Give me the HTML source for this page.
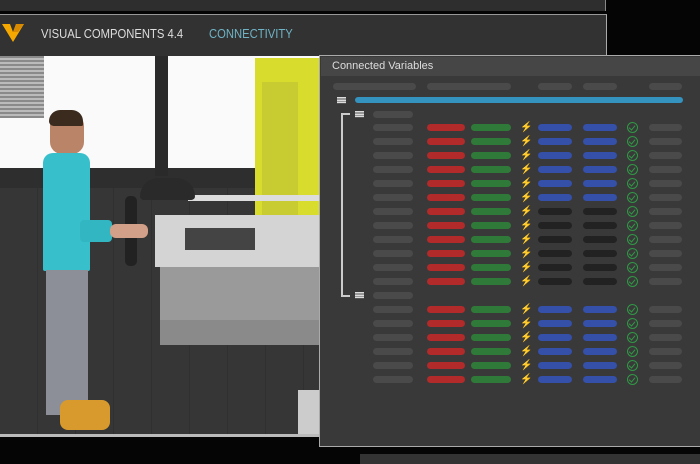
<!DOCTYPE html>
<html><head><meta charset="utf-8"><style>
*{margin:0;padding:0;box-sizing:border-box}
body{width:700px;height:464px;overflow:hidden;background:#050505;position:relative;font-family:"Liberation Sans",sans-serif}
.a{position:absolute}
.r{position:absolute;left:0;width:700px;height:8px}
.r i{position:absolute;top:0;height:7px;border-radius:4px;display:block}
.g{background:#4a4a4a}.rd{background:#b22a2a}.gr{background:#2f7a38}.bl{background:#3450a8}.bk{background:#222}
.n{left:373px;width:40px}.c1{left:427px;width:38px}.c2{left:471px;width:40px}.c3{left:538px;width:34px}.c4{left:583px;width:34px}.c6{left:649px;width:33px}
.r b{position:absolute;left:520px;top:-2px;color:#f2b61c;font-size:10px;font-weight:bold}
.r s{position:absolute;left:627px;top:-2px;width:11px;height:11px;border:1.5px solid #2f9a45;border-radius:50%;text-decoration:none}
.r s:after{content:"";position:absolute;left:2px;top:1px;width:3px;height:5px;border:solid #2f9a45;border-width:0 1.5px 1.5px 0;transform:rotate(40deg)}
.ic{position:absolute;width:9px;height:7px;background:repeating-linear-gradient(#ddd 0 1.5px,#555 1.5px 2.3px)}
.hd{position:absolute;top:27px;font-size:12.5px;transform-origin:0 0;transform:scaleX(0.9);white-space:nowrap}
</style></head><body>
<div class="a" style="left:0;top:0;width:606px;height:11px;background:#2e2e2e;border-right:1px solid #888"></div>
<div class="a" style="left:0;top:14px;width:607px;height:42px;background:#323232;border-top:1px solid #999;border-right:1.5px solid #aaa"></div>
<svg class="a" style="left:2px;top:22px" width="24" height="22"><path d="M0 2 L8 2 L11 10 L14 2 L22 2 L11 20 Z" fill="#f5a800"/><path d="M11 10 L14 2 L22 2 L16 10Z" fill="#d88a00"/></svg>
<div class="hd" style="left:41px;color:#ddd">VISUAL COMPONENTS 4.4</div>
<div class="hd" style="left:209px;color:#6fb3c6">CONNECTIVITY</div>
<!-- scene -->
<div class="a" style="left:0;top:56px;width:320px;height:378px;background:#3a3a3a"></div>
<div class="a" style="left:0;top:56px;width:320px;height:113px;background:#fafafa"></div>
<div class="a" style="left:0;top:56px;width:44px;height:62px;background:repeating-linear-gradient(#8a8a8a 0 2px,#bbb 2px 4px)"></div>
<div class="a" style="left:0;top:168px;width:320px;height:20px;background:#2e2e2e"></div>
<div class="a" style="left:0;top:188px;width:320px;height:246px;background:repeating-linear-gradient(90deg,#363636 0 37px,#303030 37px 38px),#363636"></div>
<div class="a" style="left:155px;top:56px;width:13px;height:120px;background:#2a2a2a"></div>
<div class="a" style="left:255px;top:58px;width:65px;height:175px;background:#d8dc2c"></div>
<div class="a" style="left:262px;top:82px;width:36px;height:140px;background:#c8cc30"></div>
<div class="a" style="left:160px;top:265px;width:160px;height:80px;background:#9a9a9a"></div>
<div class="a" style="left:160px;top:320px;width:160px;height:25px;background:#8a8a8a"></div>
<div class="a" style="left:155px;top:215px;width:165px;height:52px;background:#d4d4d4"></div>
<div class="a" style="left:185px;top:228px;width:70px;height:22px;background:#444"></div>
<div class="a" style="left:188px;top:195px;width:132px;height:6px;background:#ddd"></div>
<div class="a" style="left:140px;top:178px;width:55px;height:22px;background:#2a2a2a;border-radius:20px 20px 4px 4px"></div>
<div class="a" style="left:125px;top:196px;width:12px;height:70px;background:#222;border-radius:5px"></div>
<div class="a" style="left:298px;top:390px;width:22px;height:44px;background:#ccc"></div>
<!-- person -->
<div class="a" style="left:50px;top:112px;width:34px;height:42px;background:#b98468;border-radius:14px 14px 12px 12px"></div>
<div class="a" style="left:49px;top:110px;width:34px;height:16px;background:#3b2a1e;border-radius:14px 14px 2px 6px"></div>
<div class="a" style="left:43px;top:153px;width:47px;height:118px;background:#37c0cc;border-radius:10px 10px 2px 2px"></div>
<div class="a" style="left:80px;top:220px;width:32px;height:22px;background:#32b6c2;border-radius:4px"></div>
<div class="a" style="left:110px;top:224px;width:38px;height:14px;background:#d2a088;border-radius:6px"></div>
<div class="a" style="left:46px;top:270px;width:42px;height:145px;background:#8c8e98"></div>
<div class="a" style="left:60px;top:400px;width:50px;height:30px;background:#d89a2c;border-radius:8px"></div>
<!-- bottom -->
<div class="a" style="left:0;top:434px;width:320px;height:3px;background:#bbb"></div>
<!-- panel -->
<div class="a" style="left:319px;top:55px;width:381px;height:392px;background:#393939;border:1.5px solid #aaa;border-right:none"></div>
<div class="a" style="left:321px;top:57px;width:379px;height:19px;background:#464646"></div>
<div class="a" style="left:332px;top:60px;color:#ddd;font-size:11px">Connected Variables</div>
<div class="a" style="left:360px;top:454px;width:340px;height:10px;background:#333"></div>
<div class="r" style="top:83px"><i class="g" style="left:333px;width:83px"></i><i class="g" style="left:427px;width:84px"></i><i class="g c3"></i><i class="g c4"></i><i class="g c6"></i></div>
<div class="ic" style="left:337px;top:97px"></div>
<div class="a" style="left:355px;top:97px;width:328px;height:6px;background:#3593bf;border-radius:3px"></div>
<div class="a" style="left:341px;top:113px;width:1.5px;height:183px;background:#ccc"></div>
<div class="a" style="left:341px;top:113px;width:9px;height:1.5px;background:#ccc"></div>
<div class="a" style="left:341px;top:295px;width:9px;height:1.5px;background:#ccc"></div>
<div class="ic" style="left:355px;top:111px"></div>
<div class="r" style="top:111px"><i class="g n"></i></div>
<div class="ic" style="left:355px;top:292px"></div>
<div class="r" style="top:292px"><i class="g n"></i></div>

<div class="r" style="top:124px"><i class="g n"></i><i class="rd c1"></i><i class="gr c2"></i><b>⚡</b><i class="bl c3"></i><i class="bl c4"></i><s></s><i class="g c6"></i></div>
<div class="r" style="top:138px"><i class="g n"></i><i class="rd c1"></i><i class="gr c2"></i><b>⚡</b><i class="bl c3"></i><i class="bl c4"></i><s></s><i class="g c6"></i></div>
<div class="r" style="top:152px"><i class="g n"></i><i class="rd c1"></i><i class="gr c2"></i><b>⚡</b><i class="bl c3"></i><i class="bl c4"></i><s></s><i class="g c6"></i></div>
<div class="r" style="top:166px"><i class="g n"></i><i class="rd c1"></i><i class="gr c2"></i><b>⚡</b><i class="bl c3"></i><i class="bl c4"></i><s></s><i class="g c6"></i></div>
<div class="r" style="top:180px"><i class="g n"></i><i class="rd c1"></i><i class="gr c2"></i><b>⚡</b><i class="bl c3"></i><i class="bl c4"></i><s></s><i class="g c6"></i></div>
<div class="r" style="top:194px"><i class="g n"></i><i class="rd c1"></i><i class="gr c2"></i><b>⚡</b><i class="bl c3"></i><i class="bl c4"></i><s></s><i class="g c6"></i></div>
<div class="r" style="top:208px"><i class="g n"></i><i class="rd c1"></i><i class="gr c2"></i><b>⚡</b><i class="bk c3"></i><i class="bk c4"></i><s></s><i class="g c6"></i></div>
<div class="r" style="top:222px"><i class="g n"></i><i class="rd c1"></i><i class="gr c2"></i><b>⚡</b><i class="bk c3"></i><i class="bk c4"></i><s></s><i class="g c6"></i></div>
<div class="r" style="top:236px"><i class="g n"></i><i class="rd c1"></i><i class="gr c2"></i><b>⚡</b><i class="bk c3"></i><i class="bk c4"></i><s></s><i class="g c6"></i></div>
<div class="r" style="top:250px"><i class="g n"></i><i class="rd c1"></i><i class="gr c2"></i><b>⚡</b><i class="bk c3"></i><i class="bk c4"></i><s></s><i class="g c6"></i></div>
<div class="r" style="top:264px"><i class="g n"></i><i class="rd c1"></i><i class="gr c2"></i><b>⚡</b><i class="bk c3"></i><i class="bk c4"></i><s></s><i class="g c6"></i></div>
<div class="r" style="top:278px"><i class="g n"></i><i class="rd c1"></i><i class="gr c2"></i><b>⚡</b><i class="bk c3"></i><i class="bk c4"></i><s></s><i class="g c6"></i></div>

<div class="r" style="top:306px"><i class="g n"></i><i class="rd c1"></i><i class="gr c2"></i><b>⚡</b><i class="bl c3"></i><i class="bl c4"></i><s></s><i class="g c6"></i></div>
<div class="r" style="top:320px"><i class="g n"></i><i class="rd c1"></i><i class="gr c2"></i><b>⚡</b><i class="bl c3"></i><i class="bl c4"></i><s></s><i class="g c6"></i></div>
<div class="r" style="top:334px"><i class="g n"></i><i class="rd c1"></i><i class="gr c2"></i><b>⚡</b><i class="bl c3"></i><i class="bl c4"></i><s></s><i class="g c6"></i></div>
<div class="r" style="top:348px"><i class="g n"></i><i class="rd c1"></i><i class="gr c2"></i><b>⚡</b><i class="bl c3"></i><i class="bl c4"></i><s></s><i class="g c6"></i></div>
<div class="r" style="top:362px"><i class="g n"></i><i class="rd c1"></i><i class="gr c2"></i><b>⚡</b><i class="bl c3"></i><i class="bl c4"></i><s></s><i class="g c6"></i></div>
<div class="r" style="top:376px"><i class="g n"></i><i class="rd c1"></i><i class="gr c2"></i><b>⚡</b><i class="bl c3"></i><i class="bl c4"></i><s></s><i class="g c6"></i></div>
</body></html>
